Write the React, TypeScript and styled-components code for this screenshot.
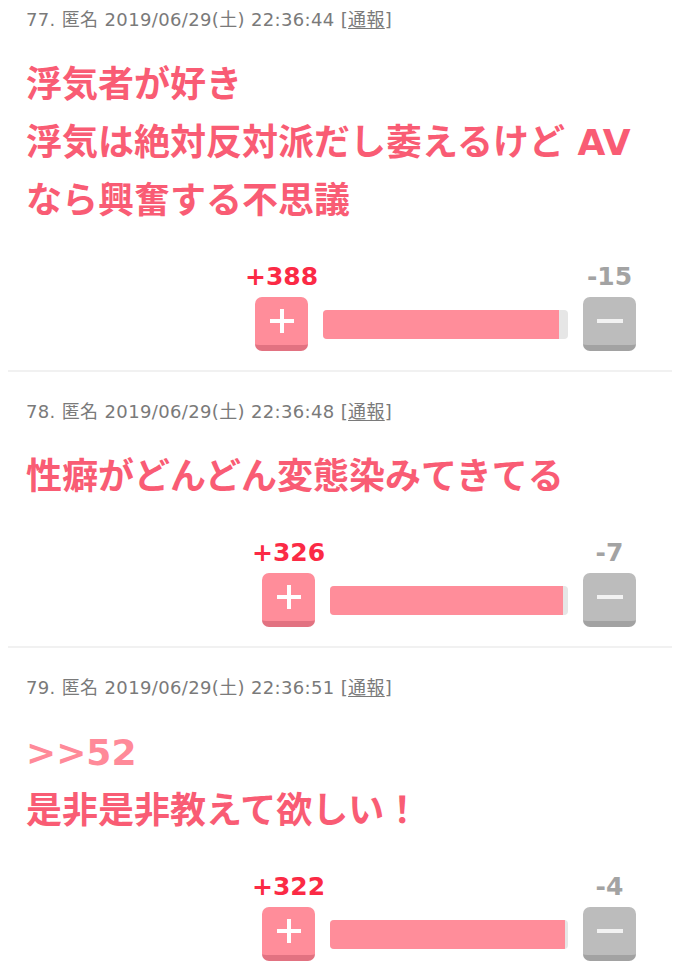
import styled, { createGlobalStyle } from 'styled-components';

type Post = {
  no: number;
  time: string;
  anchor?: string;
  lines: string[];
  plus: number;
  minus: number;
  voteWidth: number;
};

const posts: Post[] = [
  {
    no: 77,
    time: '2019/06/29(土) 22:36:44',
    lines: ['浮気者が好き', '浮気は絶対反対派だし萎えるけど AV', 'なら興奮する不思議'],
    plus: 388,
    minus: 15,
    voteWidth: 381,
  },
  {
    no: 78,
    time: '2019/06/29(土) 22:36:48',
    lines: ['性癖がどんどん変態染みてきてる'],
    plus: 326,
    minus: 7,
    voteWidth: 374,
  },
  {
    no: 79,
    time: '2019/06/29(土) 22:36:51',
    anchor: '>>52',
    lines: ['是非是非教えて欲しい！'],
    plus: 322,
    minus: 4,
    voteWidth: 374,
  },
];

const GlobalStyle = createGlobalStyle`
  html, body {
    margin: 0;
    padding: 0;
    background: #ffffff;
  }
  body {
    font-family: "DejaVu Sans", "Noto Sans CJK JP", sans-serif;
    overflow: hidden;
  }
`;

export default function App() {
  return (
    <>
      <GlobalStyle />
      <List>
        {posts.map((post, i) => (
          <Item key={post.no} $first={i === 0}>
            <Meta>
              {post.no}. 匿名 {post.time} [<Report>通報</Report>]
            </Meta>
            <Body>
              {post.anchor && <Anchor>{post.anchor}</Anchor>}
              {post.lines.map((line) => (
                <Line key={line}>{line}</Line>
              ))}
            </Body>
            <Vote $width={post.voteWidth}>
              <PlusCount>+{post.plus}</PlusCount>
              <MinusCount>-{post.minus}</MinusCount>
              <VoteButton $kind="plus" aria-label="plus">
                <svg width="26" height="26" viewBox="0 0 26 26">
                  <path d="M13 1v24M1 13h24" stroke="#ffffff" strokeWidth="4" />
                </svg>
              </VoteButton>
              <Bar>
                <Fill style={{ width: `${(post.plus / (post.plus + post.minus)) * 100}%` }} />
              </Bar>
              <VoteButton $kind="minus" aria-label="minus">
                <svg width="28" height="26" viewBox="0 0 28 26">
                  <path d="M1 13h26" stroke="#f2f2f2" strokeWidth="4" />
                </svg>
              </VoteButton>
            </Vote>
          </Item>
        ))}
      </List>
    </>
  );
}

const List = styled.div`
  margin: 0 8px;
`;

const Item = styled.div<{ $first?: boolean }>`
  padding: ${(p) => (p.$first ? '8px' : '28px')} 36px 19px 18px;
  border-bottom: 2px solid #f1f1f1;
`;

const Meta = styled.div`
  font-size: 18px;
  line-height: 24px;
  letter-spacing: 0.35px;
  color: #7a7a7a;
  white-space: nowrap;
`;

const Report = styled.span`
  text-decoration: underline;
  text-underline-offset: 2px;
`;

const Body = styled.div`
  margin-top: 24px;
  font-family: "DejaVu Sans", "Noto Sans CJK JP", sans-serif;
  font-weight: 700;
  font-size: 36px;
  line-height: 58px;
  color: #f95c74;
`;

const Line = styled.div`
  white-space: nowrap;
`;

const Anchor = styled.div`
  color: #ff8a99;
`;

const Vote = styled.div<{ $width: number }>`
  width: ${(p) => p.$width}px;
  margin: 32px 0 0 auto;
  display: grid;
  grid-template-columns: 53px 1fr 53px;
  grid-template-rows: 30px 54px;
  column-gap: 15px;
  row-gap: 5px;
  align-items: center;
`;

const Count = styled.div`
  font-family: "DejaVu Sans", sans-serif;
  font-weight: 700;
  font-size: 25px;
  line-height: 30px;
  justify-self: center;
  white-space: nowrap;
`;

const PlusCount = styled(Count)`
  grid-column: 1;
  color: #fb2a45;
`;

const MinusCount = styled(Count)`
  grid-column: 3;
  color: #a3a3a3;
`;

const VoteButton = styled.div<{ $kind: 'plus' | 'minus' }>`
  box-sizing: border-box;
  height: 54px;
  border-radius: 7px;
  display: flex;
  align-items: center;
  justify-content: center;
  background: ${(p) => (p.$kind === 'plus' ? '#ff8d9a' : '#bcbcbc')};
  border-bottom: 6px solid ${(p) => (p.$kind === 'plus' ? '#e27281' : '#a2a2a2')};
`;

const Bar = styled.div`
  height: 29px;
  border-radius: 4px;
  background: #e6e6e6;
  overflow: hidden;
`;

const Fill = styled.div`
  height: 100%;
  background: #ff8d9a;
`;
